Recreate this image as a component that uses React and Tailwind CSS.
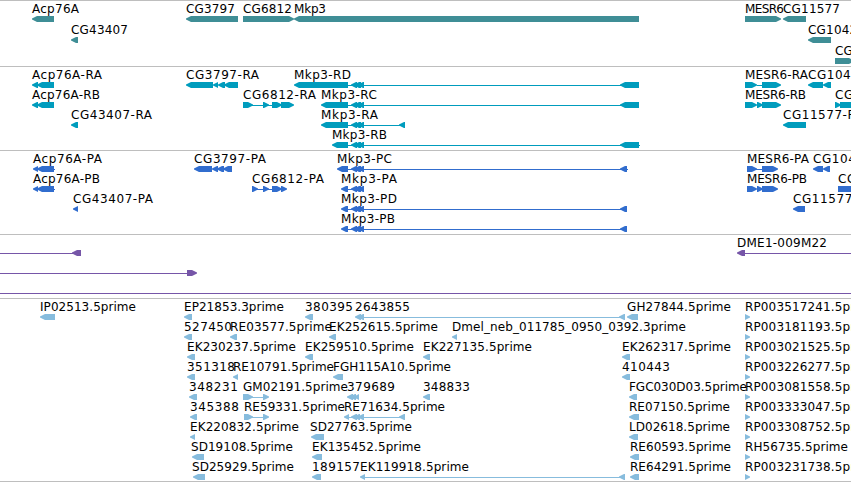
import clsx from "clsx";

// labels: [left, right, text]
// shapes: "l" / "r" = exon pointing left / right, "-" = intron line
const mkp3Introns = [
  ["l", 351, 357],
  ["l", 354, 361],
  ["l", 358, 364],
];

const tracks = [
  {
    id: "gene",
    color: "#3f8e96",
    height: "h-[66px]",
    tall: true,
    rows: [
      {
        labels: [
          [32, 79, "Acp76A"],
          [186, 235, "CG3797"],
          [243, 292, "CG6812"],
          [294, 326, "Mkp3"],
          [745, 784, "MESR6"],
          [783, 840, "CG11577"],
        ],
        shapes: [
          ["l", 32, 54],
          ["l", 186, 238],
          ["r", 243, 294],
          ["l", 294, 639],
          ["r", 745, 781],
          ["l", 783, 806],
        ],
      },
      {
        labels: [
          [71, 128, "CG43407"],
          [808, 865, "CG10424"],
        ],
        shapes: [
          ["l", 71, 78],
          ["l", 808, 831],
        ],
      },
      { labels: [[835, 892, "CG10425"]], shapes: [["r", 835, 854]] },
    ],
  },
  {
    id: "transcript",
    color: "#009cbd",
    height: "h-[84px]",
    rows: [
      {
        labels: [
          [32, 102, "Acp76A-RA"],
          [186, 259, "CG3797-RA"],
          [294, 351, "Mkp3-RD"],
          [745, 808, "MESR6-RA"],
          [808, 889, "CG10424-RA"],
        ],
        shapes: [
          ["l", 32, 38],
          ["l", 37, 54],
          ["l", 186, 213],
          ["l", 213, 218],
          ["l", 218, 225],
          ["l", 224, 238],
          ["l", 294, 348],
          ...mkp3Introns,
          ["-", 348, 621],
          ["l", 620, 639],
          ["r", 745, 757],
          ["-", 757, 762],
          ["r", 762, 781],
          ["l", 808, 823],
          ["l", 823, 831],
        ],
      },
      {
        labels: [
          [32, 100, "Acp76A-RB"],
          [243, 316, "CG6812-RA"],
          [321, 377, "Mkp3-RC"],
          [745, 806, "MESR6-RB"],
          [835, 916, "CG10425-RA"],
        ],
        shapes: [
          ["l", 32, 38],
          ["l", 37, 54],
          ["r", 243, 253],
          ["-", 243, 290],
          ["r", 263, 269],
          ["r", 272, 282],
          ["r", 281, 294],
          ["l", 321, 348],
          ...mkp3Introns,
          ["-", 348, 621],
          ["l", 620, 639],
          ["r", 745, 757],
          ["r", 757, 763],
          ["r", 762, 781],
          ["r", 835, 841],
          ["r", 840, 856],
        ],
      },
      {
        labels: [
          [71, 152, "CG43407-RA"],
          [321, 378, "Mkp3-RA"],
          [783, 864, "CG11577-RA"],
        ],
        shapes: [
          ["l", 71, 78],
          ["l", 321, 348],
          ...mkp3Introns,
          ["-", 348, 401],
          ["l", 399, 405],
          ["l", 783, 806],
        ],
      },
      {
        labels: [[332, 387, "Mkp3-RB"]],
        shapes: [["l", 332, 348], ...mkp3Introns, ["-", 348, 640], ["l", 620, 639]],
      },
    ],
  },
  {
    id: "protein",
    color: "#316dce",
    height: "h-[84px]",
    rows: [
      {
        labels: [
          [33, 102, "Acp76A-PA"],
          [194, 266, "CG3797-PA"],
          [337, 392, "Mkp3-PC"],
          [747, 809, "MESR6-PA"],
          [813, 893, "CG10424-PA"],
        ],
        shapes: [
          ["l", 33, 38],
          ["l", 37, 54],
          ["-", 40, 55],
          ["l", 194, 212],
          ["l", 212, 218],
          ["l", 217, 224],
          ["l", 223, 232],
          ["l", 337, 348],
          ...mkp3Introns,
          ["-", 348, 628],
          ["l", 620, 627],
          ["r", 747, 757],
          ["-", 755, 763],
          ["r", 762, 778],
          ["l", 813, 823],
          ["l", 823, 830],
        ],
      },
      {
        labels: [
          [33, 100, "Acp76A-PB"],
          [252, 324, "CG6812-PA"],
          [341, 397, "Mkp3-PA"],
          [747, 807, "MESR6-PB"],
          [838, 918, "CG10425-PA"],
        ],
        shapes: [
          ["l", 33, 38],
          ["l", 37, 54],
          ["-", 40, 55],
          ["r", 252, 258],
          ["-", 252, 284],
          ["r", 263, 269],
          ["r", 272, 282],
          ["r", 281, 287],
          ["l", 341, 348],
          ["-", 345, 360],
          ...mkp3Introns,
          ["r", 747, 757],
          ["r", 757, 763],
          ["r", 762, 778],
          ["r", 838, 856],
        ],
      },
      {
        labels: [
          [73, 153, "CG43407-PA"],
          [341, 397, "Mkp3-PD"],
          [793, 873, "CG11577-PA"],
        ],
        shapes: [
          ["l", 73, 78],
          ["l", 341, 348],
          ...mkp3Introns,
          ["-", 348, 622],
          ["l", 620, 627],
          ["l", 793, 805],
        ],
      },
      {
        labels: [[341, 395, "Mkp3-PB"]],
        shapes: [["l", 341, 348], ...mkp3Introns, ["-", 348, 622], ["l", 620, 627]],
      },
    ],
  },
  {
    id: "bac",
    color: "#7656a8",
    height: "h-[64px]",
    rows: [
      {
        labels: [[737, 827, "DME1-009M22"]],
        shapes: [
          ["-", 0, 76],
          ["l", 72, 81],
          ["l", 737, 745],
          ["-", 741, 851],
        ],
      },
      {
        labels: [],
        shapes: [
          ["-", 0, 188],
          ["r", 187, 197],
        ],
      },
      { labels: [], shapes: [["-", 0, 851]] },
    ],
  },
  {
    id: "est",
    color: "#87bcdd",
    height: "h-[184px]",
    last: true,
    rows: [
      {
        labels: [
          [40, 136, "IP02513.5prime"],
          [184, 284, "EP21853.3prime"],
          [305, 353, "380395"],
          [355, 410, "2643855"],
          [627, 731, "GH27844.5prime"],
          [745, 878, "RP003517241.5prime"],
        ],
        shapes: [
          ["l", 40, 55],
          ["l", 184, 192],
          ["l", 305, 313],
          ["l", 355, 361],
          ["l", 358, 364],
          ["-", 362, 622],
          ["l", 619, 625],
          ["l", 627, 638],
          ["r", 745, 750],
        ],
      },
      {
        labels: [
          [184, 232, "527450"],
          [230, 332, "RE03577.5prime"],
          [329, 438, "EK252615.5prime"],
          [452, 686, "Dmel_neb_011785_0950_0392.3prime"],
          [745, 878, "RP003181193.5prime"],
        ],
        shapes: [
          ["l", 184, 192],
          ["l", 230, 237],
          ["l", 329, 336],
          ["l", 452, 457],
          ["r", 745, 750],
        ],
      },
      {
        labels: [
          [187, 296, "EK230237.5prime"],
          [305, 414, "EK259510.5prime"],
          [423, 532, "EK227135.5prime"],
          [622, 731, "EK262317.5prime"],
          [745, 878, "RP003021525.5prime"],
        ],
        shapes: [
          ["l", 187, 195],
          ["l", 305, 313],
          ["l", 423, 430],
          ["l", 622, 630],
          ["r", 745, 750],
        ],
      },
      {
        labels: [
          [187, 235, "351318"],
          [233, 334, "RE10791.5prime"],
          [333, 451, "FGH115A10.5prime"],
          [622, 670, "410443"],
          [745, 878, "RP003226277.5prime"],
        ],
        shapes: [
          ["l", 187, 195],
          ["l", 233, 238],
          ["l", 333, 343],
          ["l", 622, 630],
          ["r", 745, 750],
        ],
      },
      {
        labels: [
          [189, 238, "348231"],
          [243, 348, "GM02191.5prime"],
          [347, 395, "379689"],
          [423, 470, "348833"],
          [629, 747, "FGC030D03.5prime"],
          [745, 878, "RP003081558.5prime"],
        ],
        shapes: [
          ["l", 189, 197],
          ["r", 243, 253],
          ["-", 250, 266],
          ["r", 263, 269],
          ["l", 347, 353],
          ["l", 350, 356],
          ["l", 354, 359],
          ["l", 423, 430],
          ["l", 629, 637],
          ["r", 745, 750],
        ],
      },
      {
        labels: [
          [190, 239, "345388"],
          [244, 345, "RE59331.5prime"],
          [344, 445, "RE71634.5prime"],
          [629, 730, "RE07150.5prime"],
          [745, 878, "RP003333047.5prime"],
        ],
        shapes: [
          ["l", 190, 197],
          ["r", 244, 253],
          ["-", 250, 266],
          ["r", 263, 269],
          ["l", 344, 349],
          ["-", 346, 402],
          ["l", 351, 357],
          ["l", 354, 360],
          ["l", 358, 364],
          ["l", 399, 405],
          ["l", 629, 639],
          ["r", 745, 750],
        ],
      },
      {
        labels: [
          [190, 299, "EK220832.5prime"],
          [310, 412, "SD27763.5prime"],
          [629, 730, "LD02618.5prime"],
          [745, 878, "RP003308752.5prime"],
        ],
        shapes: [
          ["l", 190, 195],
          ["l", 311, 324],
          ["l", 629, 638],
          ["r", 745, 750],
        ],
      },
      {
        labels: [
          [191, 293, "SD19108.5prime"],
          [312, 421, "EK135452.5prime"],
          [630, 731, "RE60593.5prime"],
          [745, 848, "RH56735.5prime"],
        ],
        shapes: [
          ["l", 192, 204],
          ["l", 312, 322],
          ["l", 630, 639],
          ["r", 745, 750],
        ],
      },
      {
        labels: [
          [192, 294, "SD25929.5prime"],
          [312, 360, "189157"],
          [360, 469, "EK119918.5prime"],
          [630, 731, "RE64291.5prime"],
          [745, 878, "RP003231738.5prime"],
        ],
        shapes: [
          ["l", 193, 205],
          ["l", 312, 321],
          ["l", 360, 365],
          ["-", 363, 622],
          ["l", 619, 625],
          ["l", 630, 639],
          ["r", 745, 750],
        ],
      },
    ],
  },
];

function Shape({ kind, from, to, color }) {
  if (kind === "-") {
    return <rect x={from} y={18} width={to - from} height={1} fill={color} />;
  }
  const head = Math.min(5, to - from);
  const points =
    kind === "l"
      ? `${from},17.5 ${from + head},15 ${to},15 ${to},21 ${from + head},21 ${from},18.5`
      : `${to},17.5 ${to - head},15 ${from},15 ${from},21 ${to - head},21 ${to},18.5`;
  return <polygon points={points} fill={color} />;
}

function Row({ row, color, tall }) {
  return (
    <svg
      className={clsx("block w-[851px] shrink-0 overflow-visible", tall ? "h-[21px]" : "h-5")}
    >
      {row.shapes.map(([kind, from, to], i) => (
        <Shape key={i} kind={kind} from={from} to={to} color={color} />
      ))}
      {row.labels.map(([left, right, text]) => (
        <text
          key={text}
          x={left}
          y={12}
          textLength={right - left}
          className="fill-black font-['DejaVu_Sans',sans-serif] text-[12px]"
        >
          {text}
        </text>
      ))}
    </svg>
  );
}

function Track({ track }) {
  return (
    <section
      className={clsx(
        "flex shrink-0 flex-col border-t border-[#bebebe]",
        track.height,
        track.last && "border-b"
      )}
    >
      {track.rows.map((row, i) => (
        <Row key={i} row={row} color={track.color} tall={track.tall} />
      ))}
    </section>
  );
}

export default function App() {
  return (
    <main className="flex h-[482px] w-[851px] flex-col overflow-hidden bg-white">
      {tracks.map((track) => (
        <Track key={track.id} track={track} />
      ))}
    </main>
  );
}
